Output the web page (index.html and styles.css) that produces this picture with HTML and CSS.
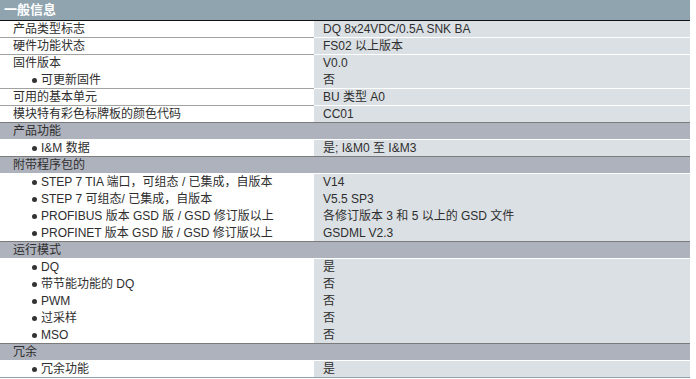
FILE: index.html
```html
<!DOCTYPE html>
<html lang="zh">
<head>
<meta charset="utf-8">
<title>一般信息</title>
<link rel="stylesheet" href="styles.css">
</head>
<body>
<table class="spec">
  <colgroup><col class="c-label"><col class="c-value"></colgroup>
  <tr class="title"><th colspan="2">一般信息</th></tr>
  <tr><td class="label">产品类型标志</td><td class="value">DQ 8x24VDC/0.5A SNK BA</td></tr>
  <tr><td class="label">硬件功能状态</td><td class="value">FS02 以上版本</td></tr>
  <tr class="open"><td class="label">固件版本</td><td class="value">V0.0</td></tr>
  <tr><td class="label sub">可更新固件</td><td class="value">否</td></tr>
  <tr><td class="label">可用的基本单元</td><td class="value">BU 类型 A0</td></tr>
  <tr class="pre"><td class="label">模块特有彩色标牌板的颜色代码</td><td class="value">CC01</td></tr>
  <tr class="section"><td colspan="2">产品功能</td></tr>
  <tr class="pre"><td class="label sub">I&amp;M 数据</td><td class="value">是; I&amp;M0 至 I&amp;M3</td></tr>
  <tr class="section"><td colspan="2">附带程序包的</td></tr>
  <tr class="open"><td class="label sub">STEP 7 TIA 端口，可组态 / 已集成，自版本</td><td class="value">V14</td></tr>
  <tr class="open"><td class="label sub">STEP 7 可组态/ 已集成，自版本</td><td class="value">V5.5 SP3</td></tr>
  <tr class="open"><td class="label sub">PROFIBUS 版本 GSD 版 / GSD 修订版以上</td><td class="value">各修订版本 3 和 5 以上的 GSD 文件</td></tr>
  <tr class="pre"><td class="label sub">PROFINET 版本 GSD 版 / GSD 修订版以上</td><td class="value">GSDML V2.3</td></tr>
  <tr class="section"><td colspan="2">运行模式</td></tr>
  <tr class="open"><td class="label sub">DQ</td><td class="value">是</td></tr>
  <tr class="open"><td class="label sub">带节能功能的 DQ</td><td class="value">否</td></tr>
  <tr class="open"><td class="label sub">PWM</td><td class="value">否</td></tr>
  <tr class="open"><td class="label sub">过采样</td><td class="value">否</td></tr>
  <tr class="pre"><td class="label sub">MSO</td><td class="value">否</td></tr>
  <tr class="section"><td colspan="2">冗余</td></tr>
  <tr class="last"><td class="label sub">冗余功能</td><td class="value">是</td></tr>
</table>
</body>
</html>
```

FILE: styles.css
```css
html, body {
  margin: 0;
  padding: 0;
  background: #ffffff;
}

body {
  font-family: "Liberation Sans", Arial, "Noto Sans CJK SC", sans-serif;
  font-size: 12px;
  color: #2e2e2e;
}

.spec {
  width: 690px;
  table-layout: fixed;
  border-collapse: separate;
  border-spacing: 0;
}

.c-label { width: 314px; }
.c-value { width: 376px; }

.spec td,
.spec th {
  padding: 0;
  height: 16px;
  line-height: 16px;
  white-space: nowrap;
  text-align: left;
  vertical-align: middle;
}

.spec .title th {
  height: 20px;
  line-height: 20px;
  background: #8fa4af;
  color: #ffffff;
  font-size: 13px;
  font-weight: bold;
  padding-left: 4px;
  border-bottom: 1px solid #111111;
}

.spec .label {
  background: #ffffff;
  padding-left: 13px;
  border-bottom: 1px solid #a2a2a2;
}

.spec .value {
  background: #dbe0e4;
  padding-left: 9px;
  border-bottom: 1px solid #ffffff;
}

.spec .open .label,
.spec .open .value {
  border-bottom-color: transparent;
}

.spec .pre .label,
.spec .pre .value {
  border-bottom-color: #7b7b7b;
}

.sub {
  position: relative;
}

.spec .sub {
  padding-left: 41px;
}

.sub::before {
  content: "";
  position: absolute;
  left: 32px;
  top: 6px;
  width: 5px;
  height: 5px;
  border-radius: 50%;
  background: #333333;
}

.spec .section td {
  background: #aeb2bc;
  padding-left: 13px;
  border-bottom: 1px solid #ffffff;
}

.spec .last .label,
.spec .last .value {
  border-bottom: 1px solid #8fa4af;
}
```
